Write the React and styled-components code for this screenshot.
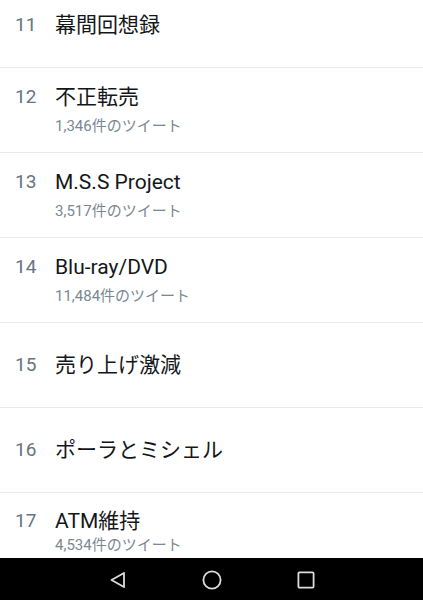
import React from "react";
import styled, { createGlobalStyle } from "styled-components";

const GlobalStyle = createGlobalStyle`
  html, body { margin: 0; padding: 0; background: #ffffff; }
  body { font-family: Roboto, "Noto Sans CJK JP", sans-serif; }
`;

const Screen = styled.div`
  width: 423px;
  height: 600px;
  display: flex;
  flex-direction: column;
  overflow: hidden;
  background: #ffffff;
`;

const List = styled.div`
  flex: 1;
  min-height: 0;
  overflow: hidden;
`;

const Track = styled.div`
  margin-top: -17px;
`;

const Row = styled.div`
  height: 84px;
  border-bottom: 1px solid #e6ecf0;
  display: flex;
  align-items: center;
  padding-left: 15px;
`;

const Inner = styled.div`
  display: flex;
  align-items: flex-start;
`;

const Rank = styled.div`
  width: 40px;
  font-size: 19px;
  line-height: 26px;
  color: #66757f;
`;

const Body = styled.div`
  display: flex;
  flex-direction: column;
`;

const Title = styled.div`
  font-size: 21px;
  line-height: 26px;
  color: #14171a;
`;

const Count = styled.div`
  margin-top: ${(p) => (p.$compact ? "1px" : "6px")};
  padding-bottom: ${(p) => (p.$compact ? "7px" : "0")};
  font-size: 15px;
  line-height: 20px;
  color: #7a8893;
`;

const NavBar = styled.div`
  height: 42px;
  flex-shrink: 0;
  background: #000000;
  display: flex;
  justify-content: center;
  align-items: center;
`;

const NavSlot = styled.div`
  width: 94px;
  height: 42px;
  display: flex;
  align-items: center;
  justify-content: center;
  padding-top: 2px;
  box-sizing: border-box;
`;

const items = [
  { rank: 11, title: "幕間回想録" },
  { rank: 12, title: "不正転売", count: "1,346件のツイート" },
  { rank: 13, title: "M.S.S Project", count: "3,517件のツイート" },
  { rank: 14, title: "Blu-ray/DVD", count: "11,484件のツイート" },
  { rank: 15, title: "売り上げ激減" },
  { rank: 16, title: "ポーラとミシェル" },
  { rank: 17, title: "ATM維持", count: "4,534件のツイート", compact: true },
];

export default function App() {
  return (
    <>
      <GlobalStyle />
      <Screen>
        <List>
          <Track>
            {items.map((it) => (
              <Row key={it.rank}>
                <Inner>
                  <Rank>{it.rank}</Rank>
                  <Body>
                    <Title>{it.title}</Title>
                    {it.count && <Count $compact={it.compact}>{it.count}</Count>}
                  </Body>
                </Inner>
              </Row>
            ))}
          </Track>
        </List>
        <NavBar>
          <NavSlot>
            <svg width="18" height="18" viewBox="0 0 18 18">
              <path d="M15 2 L2.5 9 L15 16 Z" fill="none" stroke="#dcdcdc" strokeWidth="1.8" strokeLinejoin="round" />
            </svg>
          </NavSlot>
          <NavSlot>
            <svg width="20" height="20" viewBox="0 0 20 20">
              <circle cx="10" cy="10" r="8.6" fill="none" stroke="#dcdcdc" strokeWidth="1.8" />
            </svg>
          </NavSlot>
          <NavSlot>
            <svg width="18" height="18" viewBox="0 0 18 18">
              <rect x="1.4" y="1.4" width="15.2" height="15.2" rx="1.2" fill="none" stroke="#dcdcdc" strokeWidth="1.8" />
            </svg>
          </NavSlot>
        </NavBar>
      </Screen>
    </>
  );
}
